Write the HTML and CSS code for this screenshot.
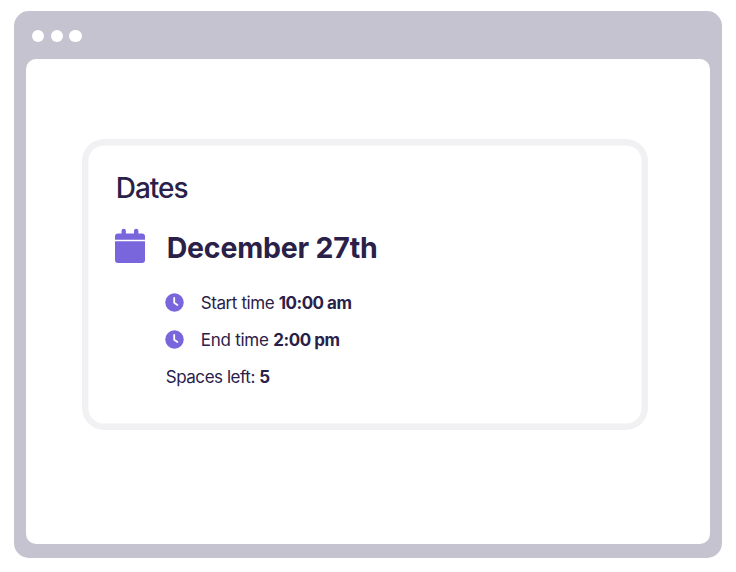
FILE: index.html
```html
<!DOCTYPE html>
<html lang="en">
<head>
  <meta charset="UTF-8">
  <title>Dates</title>
  <link rel="stylesheet" href="styles.css">
</head>
<body>

<div class="window">
  <div class="bar">
    <span class="dot"></span>
    <span class="dot"></span>
    <span class="dot"></span>
  </div>

  <div class="page">
    <div class="card">
      <h2>Dates</h2>

      <div class="date">
        <svg class="calendar" viewBox="0 0 30 34">
          <path d="M0 10.8V7.5Q0 4.5 3 4.5H6.5V2a2.2 2.2 0 0 1 4.4 0V4.5H19V2a2.2 2.2 0 0 1 4.4 0V4.5H27Q30 4.5 30 7.5V10.8ZM0 12.3H30V31Q30 34 27 34H3Q0 34 0 31Z"/>
        </svg>
        <h1>December 27th</h1>
      </div>

      <div class="time">
        <svg class="clock" viewBox="0 0 19 19">
          <circle cx="9.5" cy="9.5" r="9.25"/>
          <path d="M9.2 4.8V9.7L12.4 11.9"/>
        </svg>
        <p class="start">Start time <strong>10:00 am</strong></p>
      </div>

      <div class="time">
        <svg class="clock" viewBox="0 0 19 19">
          <circle cx="9.5" cy="9.5" r="9.25"/>
          <path d="M9.2 4.8V9.7L12.4 11.9"/>
        </svg>
        <p class="end">End time <strong>2:00 pm</strong></p>
      </div>

      <p class="spaces">Spaces left: <strong>5</strong></p>
    </div>
  </div>
</div>

</body>
</html>
```
FILE: styles.css
```css
* {
  box-sizing: border-box;
}

body {
  margin: 0;
  padding: 11px 13.7px 14px 14px;
  height: 572px;
  background: white;
  font-family: Inter, 'Liberation Sans', sans-serif;
  color: #2a2149;
}

h1, h2, p {
  margin: 0;
}

.window {
  display: flex;
  flex-direction: column;
  height: 547px;
  padding: 0 12.3px 14.5px 12px;
  background: #c6c3d1;
  border-radius: 15px;
}

.bar {
  display: flex;
  align-items: center;
  gap: 6.4px;
  height: 47.6px;
  padding: 2px 0 0 6px;
}

.dot {
  width: 12.3px;
  height: 12.3px;
  border-radius: 50%;
  background: white;
}

.page {
  flex: 1;
  padding: 80.8px 62.3px 0 55.7px;
  background: white;
  border-radius: 10px;
}

.card {
  height: 290.6px;
  padding: 29px 33px 0;
  box-shadow: inset 0 0 0 6.4px #f1f1f3;
  border-radius: 22px;
}

h2 {
  height: 40px;
  padding-left: 1px;
  font-size: 28px;
  font-weight: 450;
  line-height: 40px;
  letter-spacing: -1px;
}

.date {
  display: flex;
  align-items: center;
  height: 40px;
  margin: 20px 0 17px;
}

h1 {
  padding-left: 22px;
  font-size: 28.5px;
  font-weight: 700;
  line-height: 40px;
  letter-spacing: -0.2px;
}

.calendar {
  width: 30px;
  height: 34px;
  margin-top: -5px;
  overflow: visible;
  fill: #7965dc;
}

.time {
  display: flex;
  align-items: center;
  gap: 17px;
  height: 37px;
  padding-left: 50px;
}

.clock {
  width: 19px;
  height: 19px;
  margin-top: -2px;
  fill: #7965dc;
}

.clock path {
  fill: none;
  stroke: white;
  stroke-width: 1.8;
  stroke-linecap: round;
  stroke-linejoin: round;
}

p {
  font-size: 17px;
  line-height: 37px;
  letter-spacing: -0.5px;
}

.start {
  letter-spacing: -0.4px;
}

.start strong {
  letter-spacing: -0.5px;
}

.end {
  letter-spacing: -0.25px;
}

.end strong {
  letter-spacing: -0.45px;
}

.spaces {
  padding-left: 51px;
  letter-spacing: -0.45px;
}
```
